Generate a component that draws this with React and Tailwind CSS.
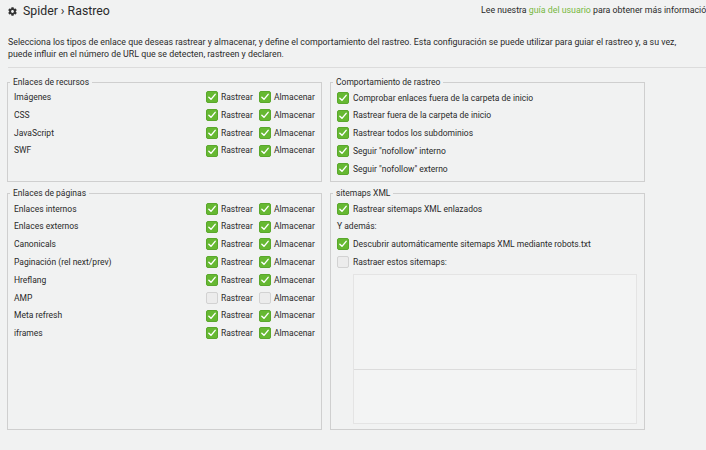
import React from 'react';
import { FaCog } from 'react-icons/fa';

const Check = ({ checked }) =>
  checked ? (
    <span className="flex w-[12px] h-[12px] shrink-0 items-center justify-center rounded-[2px] bg-[#66b832] border border-[#5aa82c]">
      <svg viewBox="0 0 12 12" className="w-[10px] h-[10px]" fill="none">
        <path d="M2.2 6.2 L4.8 8.8 L9.8 2.8" stroke="white" strokeWidth="1.7" strokeLinecap="round" strokeLinejoin="round" />
      </svg>
    </span>
  ) : (
    <span className="block w-[12px] h-[12px] shrink-0 rounded-[2px] bg-[#ececec] border border-[#d2d2d2]" />
  );

const Group = ({ title, className, children }) => (
  <fieldset className={`border border-[#cfcfcf] px-[6px] ${className}`}>
    <legend className="-ml-[4px] px-[3px] text-[8.5px] leading-[12px] text-[#2a2a2a]">{title}</legend>
    {children}
  </fieldset>
);

const LinkRow = ({ label, crawl = true, store = true }) => (
  <div className="flex items-center h-[17.8px] text-[8.5px] text-[#2a2a2a]">
    <span className="flex-1">{label}</span>
    <Check checked={crawl} />
    <span className="ml-[3px] w-[38px]">Rastrear</span>
    <Check checked={store} />
    <span className="ml-[3px] w-[41px]">Almacenar</span>
  </div>
);

const OptionRow = ({ label, checked = true }) => (
  <div className="flex items-center gap-[4px] h-[17.8px] text-[8.5px] text-[#2a2a2a]">
    <Check checked={checked} />
    <span>{label}</span>
  </div>
);

export default function App() {
  const resources = ['Imágenes', 'CSS', 'JavaScript', 'SWF'];
  const pages = [
    ['Enlaces internos', true],
    ['Enlaces externos', true],
    ['Canonicals', true],
    ['Paginación (rel next/prev)', true],
    ['Hreflang', true],
    ['AMP', false],
    ['Meta refresh', true],
    ['iframes', true],
  ];

  return (
    <div className="w-[706px] h-[450px] overflow-hidden bg-[#f1f2f2] font-['Roboto',sans-serif] text-[#2a2a2a]">
      {/* Header */}
      <div className="flex items-center h-[22px] pl-[8px]">
        <div className="flex items-center gap-[6px] w-[473px] shrink-0">
          <FaCog className="w-[9px] h-[9px] text-[#333]" />
          <span className="text-[12.3px]">Spider › Rastreo</span>
        </div>
        <span className="whitespace-nowrap text-[8.8px]">
          Lee nuestra <span className="text-[#76b83e]">guía del usuario</span> para obtener más información
        </span>
      </div>

      <p className="mt-[14px] px-[8px] text-[8.8px] leading-[12px] w-[700px]">
        Selecciona los tipos de enlace que deseas rastrear y almacenar, y define el comportamiento del rastreo. Esta configuración se puede utilizar para guiar el rastreo y, a su vez, puede influir en el número de URL que se detecten, rastreen y declaren.
      </p>

      <div className="ml-[8px] mt-[7px] border-t border-[#dcdcdc]" />

      {/* Groups */}
      <div className="grid grid-cols-[315px_315px] gap-x-[8px] gap-y-[5px] ml-[7px] mt-[8px]">
        <Group title="Enlaces de recursos" className="h-[106px]">
          <div className="pt-[0.5px]">
            {resources.map((r) => (
              <LinkRow key={r} label={r} />
            ))}
          </div>
        </Group>

        <Group title="Comportamiento de rastreo" className="h-[106px]">
          <div className="pt-[1px]">
            <OptionRow label="Comprobar enlaces fuera de la carpeta de inicio" />
            <OptionRow label="Rastrear fuera de la carpeta de inicio" />
            <OptionRow label="Rastrear todos los subdominios" />
            <OptionRow label='Seguir "nofollow" interno' />
            <OptionRow label='Seguir "nofollow" externo' />
          </div>
        </Group>

        <Group title="Enlaces de páginas" className="h-[243px]">
          <div className="pt-[1px]">
            {pages.map(([label, on]) => (
              <LinkRow key={label} label={label} crawl={on} store={on} />
            ))}
          </div>
        </Group>

        <Group title="sitemaps XML" className="h-[243px]">
          <div className="pt-[1px]">
            <OptionRow label="Rastrear sitemaps XML enlazados" />
            <div className="flex items-center h-[17.8px] text-[8.5px]">Y además:</div>
            <OptionRow label="Descubrir automáticamente sitemaps XML mediante robots.txt" />
            <OptionRow label="Rastraer estos sitemaps:" checked={false} />
            <div className="ml-[16px] mr-[1px] mt-[3px] h-[150px] flex flex-col border border-[#e4e4e4] bg-[#f3f4f4]">
              <div className="h-[95px] border-b border-[#dcdcdc]" />
              <div className="flex-1" />
            </div>
          </div>
        </Group>
      </div>
    </div>
  );
}
